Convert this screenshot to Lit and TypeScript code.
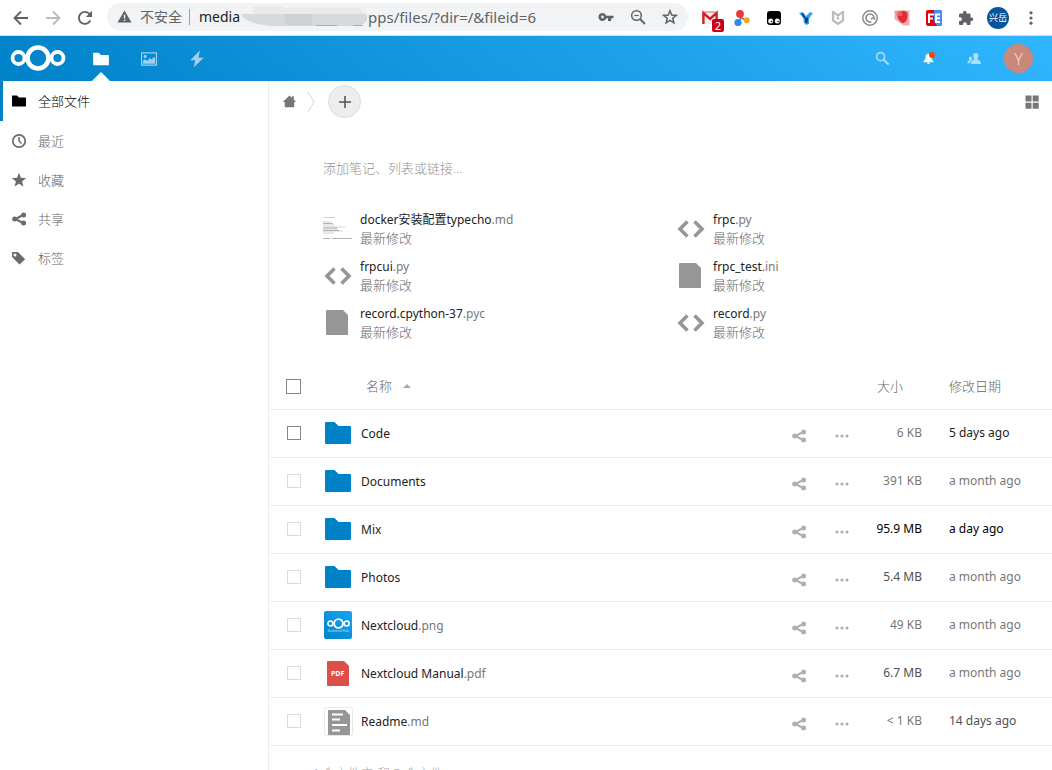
import { LitElement, html, css, svg, nothing } from "lit";
import { customElement } from "lit/decorators.js";
import { classMap } from "lit/directives/class-map.js";

const logo = (cls: string) => html`<svg class=${cls} viewBox="0 0 55 26" aria-hidden="true">
  <g fill="none" stroke="currentColor">
    <circle cx="27.5" cy="13" r="10.5" stroke-width="4.6" />
    <circle cx="8" cy="13" r="6" stroke-width="3.8" />
    <circle cx="47" cy="13" r="6" stroke-width="3.8" />
  </g>
</svg>`;

const shapes: Record<string, unknown> = {
  folder: svg`<path d="M1.5 2.5c-.3 0-.5.2-.5.5v10c0 .3.2.5.5.5h13c.3 0 .5-.2.5-.5V5c0-.3-.2-.5-.5-.5H8l-2-2z"/>`,
  clock: svg`<circle cx="8" cy="8" r="6.2" fill="none" stroke="currentColor" stroke-width="1.7"/><path d="M7.3 4h1.5v3.7l2.2 2.2-1 1-2.7-2.7z"/>`,
  star: svg`<path d="M8 .8l1.9 4.9 5.3.3-4.1 3.4 1.4 5.2L8 11.700l-4.500 2.900 1.400-5.200L.8 6l5.300-.3z"/>`,
  share: svg`<path d="M4.5 8L12 4M4.5 8L12 12" fill="none" stroke="currentColor" stroke-width="2"/><circle cx="3.700" cy="8" r="2.500"/><circle cx="12.600" cy="3.900" r="2.500"/><circle cx="12.600" cy="12.100" r="2.500"/>`,
  tag: svg`<path fill-rule="evenodd" d="M1 2.5V7l7.5 7.5 5.7-5.2L7 2H1.5zM4 3.5a1.5 1.5 0 1 1 0 3 1.5 1.5 0 0 1 0-3z"/>`,
  image: svg`<path fill-rule="evenodd" d="M0 1.2h16v13.6H0zM1.2 2.4v11.2h13.6V2.4zM4.2 3.8a1.6 1.6 0 1 1 0 3.2 1.6 1.6 0 0 1 0-3.2zM2 12.8V10l2-2 2 2 3-3 1.5 1.5L13 6l1 1v5.8z"/>`,
  bolt: svg`<path d="M10.5.5L2 9.2h4.4L5 15.5 14 6.8H9.4z"/>`,
  search: svg`<circle cx="6" cy="6" r="4.2" fill="none" stroke="currentColor" stroke-width="1.8"/><path d="M9 9l5.5 5.5" stroke="currentColor" stroke-width="2.2"/>`,
  bell: svg`<path d="M8 2c-2 0-3.6 1.5-3.6 3.8 0 3.4-1.4 4.6-2.4 5.4v1.3h12v-1.3c-1-.8-2.4-2-2.4-5.4C11.6 3.5 10 2 8 2zM6.3 13.3h3.4a1.7 1.7 0 0 1-3.4 0z"/>`,
  contacts: svg`<path d="M10 1C8.2 1 7 2.2 7 4.2c0 1.2.3 2.3 1 3.1v1.5c-1.6.8-3.3 1.3-3.3 3.2v1.800h11V12c0-1.900-1.900-2.400-3.600-3.200V7.300c.7-.8 1-1.900 1-3.100C13.100 2.200 11.800 1 10 1zM4 5c-1.200 0-2 .8-2 2.100 0 .8.200 1.300.6 1.800v.7C1.300 10.200.4 10.600.4 12v.9h3.200c0-2.400 1.300-3 2.600-3.800C5.900 8.200 6.200 5 4 5z"/>`,
  home: svg`<path d="M8 1.500L.8 8.500H3V14h10V8.500h2.200L12.600 6V2.500h-2v1.600z"/>`,
  plus: svg`<path d="M7.200 2h1.600v5.200H14v1.600H8.800V14H7.200V8.800H2V7.200h5.200z"/>`,
  grid: svg`<path d="M1.500 1.500h6v6h-6zM8.700 1.500h6v6h-6zM1.500 8.700h6v6h-6zM8.700 8.700h6v6h-6z"/>`,
  more: svg`<circle cx="3" cy="8" r="1.600"/><circle cx="8" cy="8" r="1.600"/><circle cx="13" cy="8" r="1.600"/>`,
  back: svg`<path d="M15 8H2M8 1.500L1.500 8 8 14.500" fill="none" stroke="currentColor" stroke-width="1.900"/>`,
  forward: svg`<path d="M1 8h13M8 1.500L14.500 8 8 14.500" fill="none" stroke="currentColor" stroke-width="1.900"/>`,
  reload: svg`<path d="M13.300 10.500A6 6 0 1 1 12.200 3.700L13.500 5" fill="none" stroke="currentColor" stroke-width="1.900"/><path d="M15 .8v6.100H8.900z"/>`,
  warning: svg`<path fill-rule="evenodd" d="M8 1.500L.5 14.500h15zM7.300 6h1.500v4H7.300zM7.300 11.300h1.500v1.500H7.300z"/>`,
  key: svg`<path fill-rule="evenodd" d="M4.500 4a4 4 0 1 0 3.800 5.300H10V12h3.200V9.300H15.500V6.700H8.300A4 4 0 0 0 4.500 4zm0 2.600a1.400 1.400 0 1 1 0 2.800 1.400 1.400 0 0 1 0-2.800z"/>`,
  zoomout: svg`<g fill="none" stroke="currentColor"><circle cx="6.500" cy="6.500" r="4.800" stroke-width="1.500"/><path d="M10 10l5 5" stroke-width="1.900"/><path d="M4.200 6.500h4.600" stroke-width="1.200"/></g>`,
  starline: svg`<path d="M8 1.800l1.700 4.300 4.500.3-3.500 2.900 1.200 4.500L8 11.300l-3.900 2.500 1.200-4.500L1.800 6.400l4.500-.3z" fill="none" stroke="currentColor" stroke-width="1.500"/>`,
  puzzle: svg`<path d="M13.500 7.500h-1V4.800c0-.8-.6-1.400-1.400-1.400H8.500v-1a1.700 1.700 0 0 0-3.400 0v1H2.400C1.600 3.400 1 4 1 4.800v2.500h1a1.900 1.900 0 0 1 0 3.800H1v2.600c0 .8.600 1.400 1.400 1.400H5v-1a1.900 1.900 0 0 1 3.800 0v1h2.400c.8 0 1.400-.6 1.400-1.400v-2.800h1a1.700 1.700 0 0 0 0-3.400z"/>`,
  kebab: svg`<circle cx="8" cy="2.800" r="1.600"/><circle cx="8" cy="8" r="1.600"/><circle cx="8" cy="13.200" r="1.600"/>`,
  gmail: svg`<path fill="#f3eeee" d="M0 2h16v12H0z"/><path fill="none" stroke="#d21f26" stroke-width="2.400" d="M1.400 14V3l6.600 6 6.600-6v11"/><path d="M0 2h16" stroke="#d86060"/>`,
  molecule: svg`<path d="M6 4l1 4 6 2.500M7 8l-3 5" stroke="#777" stroke-width="1.500" fill="none"/><circle cx="6" cy="4" r="3.900" fill="#ec3838"/><circle cx="4" cy="12.500" r="3.600" fill="#3388ec"/><circle cx="12.700" cy="10.300" r="3" fill="#f4a62a"/>`,
  monkey: svg`<rect x="1" y="1" width="14" height="14" rx="3" fill="#000"/><circle cx="4.700" cy="11" r="2.500" fill="#fff"/><circle cx="11.300" cy="11" r="2.500" fill="#fff"/><circle cx="5.500" cy="11.500" r=".8" fill="#000"/><circle cx="12" cy="11.500" r=".8" fill="#000"/>`,
  vee: svg`<path fill="#3aa6ef" d="M1 3l4-1 3 4 4-4 3 1-4 5.500V14l-3 1-2.500-3V8.500z"/><path fill="#0b3c78" d="M3 3.500h2l3 4.500 2.500-1L9 14l-2-2V9z"/>`,
  shield: svg`<path fill="none" stroke="#bbb" stroke-width="2.200" d="M3 1v9.500l5 3.500 5-3.500V1M3.500 2L8 5.500 12.500 2M8 5.500v4"/>`,
  swirl: svg`<g fill="none" stroke="#8a8a8a"><circle cx="8" cy="8" r="7.200" stroke-width="1.500"/><path d="M9.500 11.700A4 4 0 1 1 12 8M12.800 9.800L11.900 7.500 9 9" stroke-width="1.600"/></g>`,
  petal: svg`<path fill="#f5a9ae" d="M.5.500h15v15h-6L.5 9z"/><path fill="#dc3038" d="M4 2c4-2 9-1.500 9.500 2 .5 4-1 8-4 9C5 13 2 6 4 2z"/><path fill="#ef7d82" d="M1 1h7v5H2z" opacity=".6"/>`,
  fe: svg`<rect width="16" height="16" rx="2" fill="#e60012"/><path fill="#4a8df6" d="M8 0h6a2 2 0 0 1 2 2v12a2 2 0 0 1-2 2h-3l-3-5z"/><path fill="none" stroke="#fff" stroke-width="2" d="M3 13V4.500h5M3 8.500h4M14 4.500h-4V12h4M10 8.300h4"/>`,
};
const icon = (name: string, size = 16) =>
  html`<svg width=${size} height=${size} viewBox="0 0 16 16" fill="currentColor" aria-hidden="true">${shapes[name]}</svg>`;

const code = html`<svg class="thumb" viewBox="0 0 32 32" aria-hidden="true"><path d="M12.500 8.500L5 16l7.500 7.500M19.500 8.500L27 16l-7.500 7.500" fill="none" stroke="#969696" stroke-width="3.600"/></svg>`;
const plain = html`<svg class="thumb" viewBox="0 0 32 32" aria-hidden="true"><path fill="#969696" d="M5 3h16l5 5v20H5a1 1 0 0 1-1-1V4a1 1 0 0 1 1-1z"/></svg>`;
const textPreview = html`<svg class="thumb" viewBox="0 0 32 32" aria-hidden="true">
  <path d="M2 4.500h11M1 9h8M1 12h12M1 14h22M1 16h15M1 18h20M1 20h11" stroke="#c4c4c4" stroke-width=".8"/>
  <path d="M1 10.500h10M1 15h14M1 17.500h16M1 25.500h7M10 25.500h20" stroke="#aaa" stroke-width=".9"/></svg>`;
const folderIcon = html`<svg class="thumb" viewBox="0 0 32 32" aria-hidden="true"><path fill="#0082c9" d="M4 5h8.500l4 4H28a1 1 0 0 1 1 1v16a1 1 0 0 1-1 1H4a1 1 0 0 1-1-1V6a1 1 0 0 1 1-1z"/></svg>`;
const pdfIcon = html`<svg class="thumb" viewBox="0 0 32 32" aria-hidden="true"><path fill="#dd5048" d="M6 4h16l5 5v20H6a1 1 0 0 1-1-1V5a1 1 0 0 1 1-1z"/><text x="9" y="19" font-size="7" font-weight="700" fill="#fff">PDF</text></svg>`;
const readmeIcon = html`<svg class="thumb" viewBox="0 0 32 32" aria-hidden="true"><rect x="2.500" y="2.500" width="28" height="28" rx="2" fill="#fff" stroke="#e8e8e8"/><path fill="#969696" d="M7 5h16l5 5v20H7a1 1 0 0 1-1-1V6a1 1 0 0 1 1-1z"/><path d="M10 9.500h11M10 14.500h8M10 20h15M10 25.500h8" stroke="#fff" stroke-width="2"/></svg>`;
const picture = html`<span class="thumb pic">${logo("piclogo")}<small>Nextcloud Hub</small></span>`;

interface Row { name: string; ext?: string; icon: unknown; size: string; sizeTone: string; date: string; dateTone: string; hover?: boolean }
const rows: Row[] = [
  { name: "Code", icon: folderIcon, size: "6 KB", sizeTone: "t3", date: "5 days ago", dateTone: "t1", hover: true },
  { name: "Documents", icon: folderIcon, size: "391 KB", sizeTone: "t3", date: "a month ago", dateTone: "t3" },
  { name: "Mix", icon: folderIcon, size: "95.9 MB", sizeTone: "t0", date: "a day ago", dateTone: "t0" },
  { name: "Photos", icon: folderIcon, size: "5.4 MB", sizeTone: "t2", date: "a month ago", dateTone: "t3" },
  { name: "Nextcloud", ext: ".png", icon: picture, size: "49 KB", sizeTone: "t3", date: "a month ago", dateTone: "t3" },
  { name: "Nextcloud Manual", ext: ".pdf", icon: pdfIcon, size: "6.7 MB", sizeTone: "t2", date: "a month ago", dateTone: "t3" },
  { name: "Readme", ext: ".md", icon: readmeIcon, size: "< 1 KB", sizeTone: "t3", date: "14 days ago", dateTone: "t2" },
];
const recent = [
  { name: "docker安装配置typecho", ext: ".md", icon: textPreview },
  { name: "frpc", ext: ".py", icon: code },
  { name: "frpcui", ext: ".py", icon: code },
  { name: "frpc_test", ext: ".ini", icon: plain },
  { name: "record.cpython-37", ext: ".pyc", icon: plain },
  { name: "record", ext: ".py", icon: code },
];
const sections = [
  ["folder", "全部文件"], ["clock", "最近"], ["star", "收藏"], ["share", "共享"], ["tag", "标签"],
];
const extensions = ["gmail", "molecule", "monkey", "vee", "shield", "swirl", "petal", "fe", "puzzle"];

const base = css`
  :host, * { box-sizing: border-box; }
  svg { display: block; flex: none; }
  button { border: 0; padding: 0; margin: 0; background: none; font: inherit; color: inherit; cursor: pointer; display: flex; align-items: center; justify-content: center; }
  a { color: inherit; text-decoration: none; }
`;

@customElement("browser-bar")
export class BrowserBar extends LitElement {
  static styles = [base, css`
    :host { display: flex; align-items: center; height: 36px; padding: 0 13px; border-bottom: 1px solid #dadce0; color: #5f6368; background: #fff; font-weight: 400; }
    .nav { display: flex; gap: 16px; }
    .nav .off { color: #b9bbbe; }
    .address { display: flex; align-items: center; flex: 1; min-width: 0; height: 28px; margin: 0 14px 2px 14px; padding: 0 10px; border-radius: 14px; background: #f1f3f4; font-size: 14px; }
    .secure { margin: 0 7px 0 8px; white-space: nowrap; }
    .url { flex: 1; min-width: 0; border-left: 1px solid #9aa0a6; height: 16px; padding-left: 9px; display: flex; align-items: center; white-space: nowrap; font-size: 15px; }
    .host { color: #202124; font-size: 14px; }
    .smudge { width: 128px; height: 23px; }
    .tools { display: flex; gap: 16px; }
    .exts { display: flex; align-items: center; gap: 16px; }
    .exts button { position: relative; }
    .badge { position: absolute; left: 10px; top: 9px; min-width: 12px; height: 13px; border-radius: 2px; background: #c8001e; color: #fff; font-size: 11px; line-height: 13px; text-align: center; }
    .exts .profile { width: 22px; height: 22px; border-radius: 50%; background: #06569b; color: #fff; font-size: 9px; margin-left: -3px; white-space: nowrap; }
    .exts .menu { margin-left: -2px; }
  `];
  render() {
    return html`
      <div class="nav">
        <button aria-label="后退">${icon("back")}</button>
        <button class="off" aria-label="前进">${icon("forward")}</button>
        <button aria-label="重新加载">${icon("reload")}</button>
      </div>
      <div class="address">
        ${icon("warning", 15)}<span class="secure">不安全</span>
        <div class="url"><span class="host">media</span><svg class="smudge" viewBox="0 0 128 23" aria-hidden="true">
            <path fill="#e9eaeb" d="M13 1h30v2h75c6 2 10 8 9 12-3 5-8 6-14 6H30C16 19 4 16 1 9h12z"/>
            <path fill="#d8d9da" d="M1 9h126v6c-3 5-8 6-14 6H30C16 19 4 16 1 9z"/>
            <path fill="#cfd0d2" d="M45 9h27v11H45z"/><path fill="#76bce8" d="M76 20h21v1H76zM113 20h10v1h-10z"/></svg><span>pps/files/?dir=/&amp;fileid=6</span></div>
        <div class="tools">
          <button aria-label="密码">${icon("key")}</button>
          <button aria-label="缩放">${icon("zoomout")}</button>
          <button aria-label="收藏此页">${icon("starline")}</button>
        </div>
      </div>
      <div class="exts">
        ${extensions.map((e) => html`<button aria-label=${e}>${icon(e)}${e === "gmail" ? html`<span class="badge">2</span>` : nothing}</button>`)}
        <button class="profile">兴岳</button>
        <button class="menu" aria-label="菜单">${icon("kebab")}</button>
      </div>`;
  }
}

@customElement("cloud-header")
export class CloudHeader extends LitElement {
  static styles = [base, css`
    :host { display: flex; align-items: stretch; justify-content: space-between; height: 45px; padding: 0 10px; color: #fff; background: linear-gradient(40deg, #0082c9 0%, #30b6ff 100%); }
    .left, .right { display: flex; align-items: center; }
    .logo { width: 56px; height: 26px; margin: 0 11px 2px 0; }
    .app { display: flex; align-items: center; justify-content: center; width: 48px; height: 45px; opacity: .6; }
    .app.on { opacity: 1; position: relative; }
    .app.on::after { content: ""; position: absolute; bottom: 0; left: 50%; margin-left: -9px; border: 9px solid transparent; border-top: 0; border-bottom-color: #fff; }
    .right button { width: 46px; height: 45px; opacity: .6; }
    .right .notify { opacity: 1; position: relative; }
    .notify::after { content: ""; position: absolute; left: 24px; top: 16px; width: 6px; height: 6px; border-radius: 50%; background: #ff4402; }
    .right .avatar { width: 29px; height: 29px; margin-left: 7px; margin-right: 9px; border-radius: 50%; background: #c98879; color: #f0dcd8; opacity: 1; font-size: 16px; }
  `];
  render() {
    return html`
      <div class="left">
        <a href="#" aria-label="Nextcloud">${logo("logo")}</a>
        <a class="app on" href="#" aria-label="文件">${icon("folder", 18)}</a>
        <a class="app" href="#" aria-label="照片">${icon("image")}</a>
        <a class="app" href="#" aria-label="动态">${icon("bolt", 18)}</a>
      </div>
      <div class="right">
        <button aria-label="搜索">${icon("search", 15)}</button>
        <button class="notify" aria-label="通知">${icon("bell", 13)}</button>
        <button aria-label="联系人">${icon("contacts", 14)}</button>
        <button class="avatar">Y</button>
      </div>`;
  }
}

@customElement("cloud-nav")
export class CloudNav extends LitElement {
  static styles = [base, css`
    :host { display: block; width: 269px; flex: none; border-right: 1px solid #ededed; }
    a { display: flex; align-items: center; gap: 11px; height: 39px; padding-left: 11px; color: #666; border-left: 0 solid #0082c9; }
    a.on { height: 40px; padding-left: 8px; border-left-width: 3px; color: #000; }
    svg { color: #6b6b6b; }
    .on svg { color: #000; }
  `];
  render() {
    return html`<nav>${sections.map(([i, label], n) => html`<a href="#" class=${classMap({ on: n === 0 })}>${icon(i, 16)}<span>${label}</span></a>`)}</nav>`;
  }
}

@customElement("file-list")
export class FileList extends LitElement {
  static styles = [base, css`
    :host { display: block; flex: 1; min-width: 0; }
    .bar { display: flex; align-items: center; height: 41px; padding: 0 13px; color: #777; }
    .crumb { width: 12px; height: 22px; margin: 0 11px 0 8px; }
    .add { width: 33px; height: 33px; border: 1px solid #dbdbdb; border-radius: 50%; background: #ededed; color: #555; }
    .view { margin-left: auto; margin-right: -1px; }
    .note { display: block; width: calc(100% - 108px); margin: 35px 54px 0; height: 22px; padding: 0; border: 0; outline: 0; font: inherit; background: none; color: #222; }
    .note::placeholder { color: #939393; opacity: 1; }
    .recent { display: grid; grid-template-columns: 1fr 1fr; row-gap: 11px; margin: 32px 24px 0 53px; padding: 0; list-style: none; }
    .recent a { display: flex; align-items: center; gap: 6px; height: 36px; line-height: 18px; }
    .recent b { display: block; font-size: 12px; font-weight: 400; color: #222; }
    .thumb { width: 32px; height: 32px; flex: none; }
    i { font-style: normal; color: #777; }
    .why { color: #666; }
    table { width: 100%; margin-top: 23px; border-collapse: collapse; table-layout: fixed; }
    th, td { height: 48px; padding: 0; border-bottom: 1px solid #ebebeb; text-align: left; font-weight: inherit; white-space: nowrap; vertical-align: middle; }
    th { height: 45px; color: #666; }
    td { font-size: 12px; font-weight: 400; }
    .sel { width: 53px; padding-left: 18px; }
    .act { width: 61px; }
    .size { width: 70px; text-align: right; }
    .date { width: 130px; padding-left: 27px; }
    th.size { padding-right: 19px; }
    th .sort { margin-left: 44px; }
    .sort { gap: 11px; }
    .sort svg { color: #aaa; }
    input[type="checkbox"] { display: block; appearance: none; width: 14px; height: 14px; margin: 0; border: 1px solid #dadada; background: #fff; }
    input[type="checkbox"].strong { border-color: #878787; }
    th input[type="checkbox"] { width: 15px; height: 15px; border-color: #878787; margin-left: -1px; }
    .name { display: flex; align-items: center; gap: 7px; color: #222; }
    .name .label { padding-top: 2px; }
    .acts { display: flex; gap: 27px; color: #b0b0b0; padding-top: 5px; }
    .t0 { color: #000; } .t1 { color: #222; } .t2 { color: #505050; } .t3 { color: #777; }
    .pic { display: flex; flex-direction: column; align-items: center; justify-content: center; width: 28px; height: 28px; margin: 2px; border-radius: 2px; color: #fff; background: linear-gradient(40deg, #0082c9, #18a5f5); }
    .piclogo { width: 23px; height: 11px; }
    .pic small { font-size: 3px; line-height: 4px; opacity: .7; }
    .sum { margin: 17px 0 0 42px; line-height: 20px; color: #a3a3a3; }
  `];
  render() {
    return html`
      <div class="bar">
        <a href="#" aria-label="主目录">${icon("home", 15)}</a>
        <svg class="crumb" viewBox="0 0 12 22" aria-hidden="true"><path d="M3 1l6 10-6 10" fill="none" stroke="#d5d5d5"/></svg>
        <button class="add" aria-label="新建">${icon("plus")}</button>
        <button class="view" aria-label="切换网格视图">${icon("grid")}</button>
      </div>
      <input class="note" type="text" aria-label="笔记" placeholder="添加笔记、列表或链接..." />
      <ul class="recent">
        ${recent.map((r) => html`<li><a href="#">${r.icon}<span><b>${r.name}<i>${r.ext}</i></b><span class="why">最新修改</span></span></a></li>`)}
      </ul>
      <table>
        <thead><tr>
          <th class="sel"><input type="checkbox" aria-label="全选" /></th>
          <th><button class="sort">名称 <svg width="8" height="4" viewBox="0 0 8 4" fill="currentColor"><path d="M0 4l4-4 4 4z"/></svg></button></th>
          <th class="act"></th><th class="size">大小</th><th class="date">修改日期</th>
        </tr></thead>
        <tbody>
          ${rows.map((r) => html`<tr>
            <td class="sel"><input type="checkbox" class=${classMap({ strong: !!r.hover })} aria-label=${"选择 " + r.name} /></td>
            <td><a class="name" href="#">${r.icon}<span class="label">${r.name}<i>${r.ext ?? ""}</i></span></a></td>
            <td><div class="acts"><button aria-label="共享">${icon("share")}</button><button aria-label="操作">${icon("more")}</button></div></td>
            <td class=${"size " + r.sizeTone}>${r.size}</td>
            <td class=${"date " + r.dateTone}>${r.date}</td>
          </tr>`)}
        </tbody>
      </table>
      <p class="sum">4 个文件夹 和 3 个文件</p>`;
  }
}

@customElement("app-root")
export class AppRoot extends LitElement {
  static styles = css`
    :host { display: flex; flex-direction: column; height: 100vh; overflow: hidden; background: #fff; font: 300 13px/18px "Noto Sans", "Noto Sans CJK SC", sans-serif; }
    main { display: flex; flex: 1; min-height: 0; overflow: auto; scrollbar-width: none; }
    cloud-nav { min-height: 100%; }
  `;
  render() {
    return html`<browser-bar></browser-bar><cloud-header></cloud-header><main><cloud-nav></cloud-nav><file-list></file-list></main>`;
  }
}
